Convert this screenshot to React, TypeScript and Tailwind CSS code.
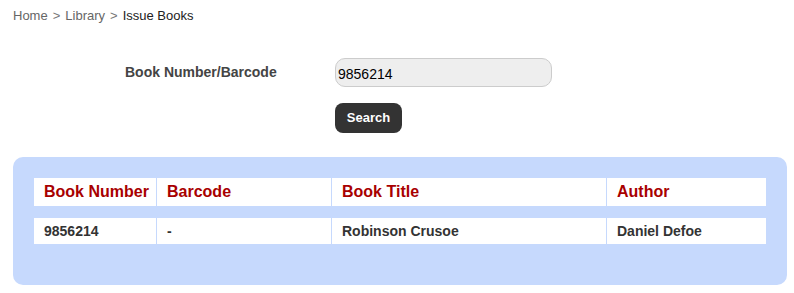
import { useState } from "react";

const columns = [
  { label: "Book Number", width: "w-[122px]" },
  { label: "Barcode", width: "w-[174px]" },
  { label: "Book Title", width: "w-[274px]" },
  { label: "Author", width: "w-[159px]" },
];

const rows = [
  { number: "9856214", barcode: "-", title: "Robinson Crusoe", author: "Daniel Defoe" },
];

export default function App() {
  const [query, setQuery] = useState("9856214");

  return (
    <div className="h-[293px] w-[794px] overflow-hidden bg-white font-['Liberation_Sans',Arial,sans-serif]">
      <nav className="pl-[13px] pt-[8px] text-[13px] leading-[15px] text-[#666]">
        <span>Home</span>
        <span className="mx-[5px] text-[#777]">&gt;</span>
        <span>Library</span>
        <span className="mx-[5px] text-[#777]">&gt;</span>
        <span className="text-[#222]">Issue Books</span>
      </nav>

      <div className="mt-[35px] flex items-center pl-[125px]">
        <label className="w-[210px] text-[14px] font-bold text-[#444]">
          Book Number/Barcode
        </label>
        <input
          value={query}
          onChange={(e) => setQuery(e.target.value)}
          className="h-[29px] w-[217px] rounded-[10px] border border-[#ccc] bg-[#eee] px-[2px] pt-[2px] text-[14px] text-black outline-none"
        />
      </div>

      <div className="mt-[16px] pl-[335px]">
        <button className="h-[30px] w-[67px] rounded-[8px] bg-[#333] text-[13px] font-bold text-white">
          Search
        </button>
      </div>

      <div className="ml-[13px] mt-[24px] w-[774px] rounded-[10px] bg-[#c6d9fd] px-[20px] pb-[29px] pt-[9px]">
        <table className="w-[734px] table-fixed border-separate border-spacing-x-px border-spacing-y-3">
          <colgroup>
            {columns.map((c) => (
              <col key={c.label} className={c.width} />
            ))}
          </colgroup>
          <thead>
            <tr>
              {columns.map((c) => (
                <th
                  key={c.label}
                  className="h-[28px] bg-white pl-[10px] text-left text-[16px] font-bold text-[#a80000]"
                >
                  {c.label}
                </th>
              ))}
            </tr>
          </thead>
          <tbody>
            {rows.map((r) => (
              <tr key={r.number}>
                {[r.number, r.barcode, r.title, r.author].map((v, i) => (
                  <td
                    key={i}
                    className="h-[26px] bg-white pl-[10px] text-[14px] font-bold text-[#333]"
                  >
                    {v}
                  </td>
                ))}
              </tr>
            ))}
          </tbody>
        </table>
      </div>
    </div>
  );
}
